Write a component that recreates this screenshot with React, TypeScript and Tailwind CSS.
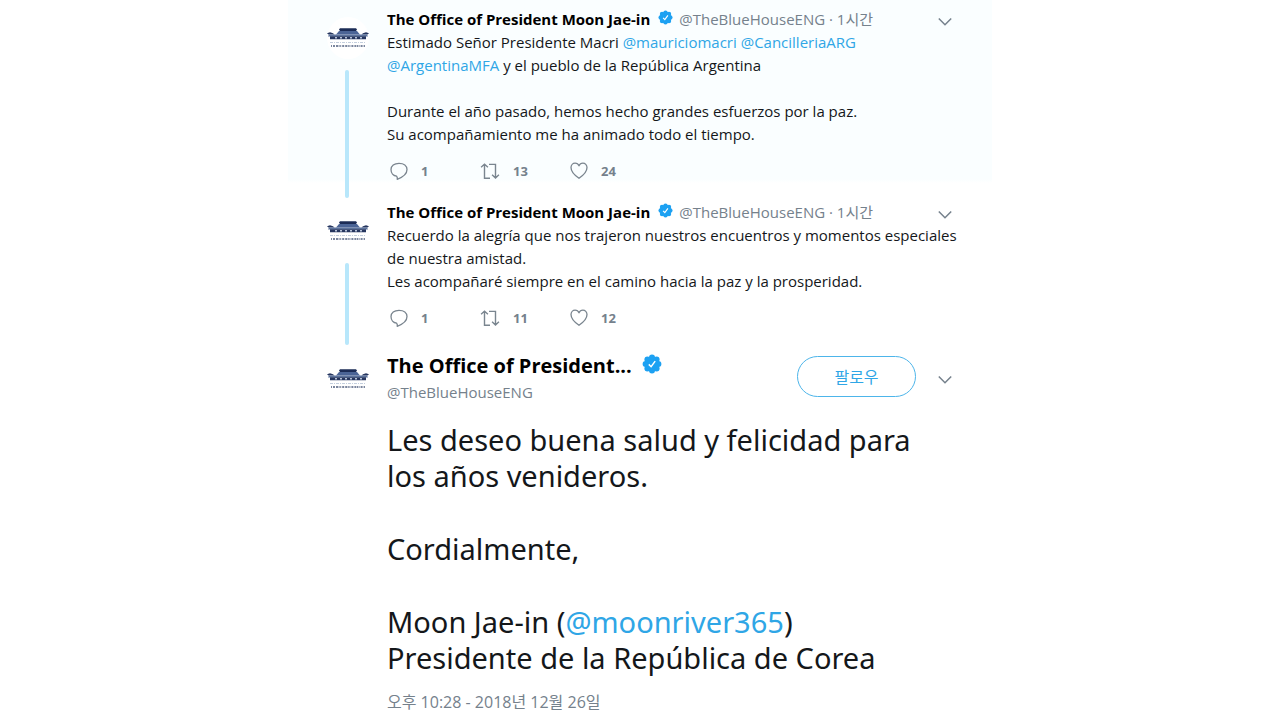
import { ReactNode } from "react";

const HANDLE = "@TheBlueHouseENG";

function Mention({ name }: { name: string }) {
  return (
    <a href={`#${name}`} className="text-[#2fa6e6] hover:underline">
      @{name}
    </a>
  );
}

function Avatar() {
  return (
    <svg viewBox="0 0 42 42" className="block w-[42px] h-[42px]" role="img" aria-label="The Blue House">
      <rect width="42" height="42" rx="21" fill="#fff" />
      <path d="M13 11.2h16l1 1.2-1 1.6H13l-1-1.6z" fill="#1c2c56" />
      <path d="M12 14h18l3 3.4H9z" fill="#4b6496" />
      <path d="M0 16.2l3-.9 3 1 1.5 1.2h27L36 16.3l3-1 3 .9-1.5 1.4h-39z" fill="#26365f" />
      <path d="M2 17.6h38l1 1.8H1z" fill="#5c739d" />
      <path d="M3 19.2h36v3H3z" fill="#26365f" />
      <path d="M8 20h2v1.600H8zM13 20h2v1.600h-2zM18 20h2v1.600h-2zM23 20h2v1.600h-2zM28 20h2v1.600h-2zM33 20h2v1.600h-2z" fill="#b7c3da" />
      <path d="M3 25.500h36" stroke="#c3cedd" strokeWidth="1" strokeDasharray="3 1 1 1" />
      <path d="M4 29h34" stroke="#7b869e" strokeWidth="2" strokeDasharray="1 1 2 1 2 .6 1 .6" />
    </svg>
  );
}

function VerifiedIcon({ className }: { className: string }) {
  return (
    <svg viewBox="0 0 20 20" className={className} role="img" aria-label="Verified">
      <g fill="#1da1f2">
        <circle cx="10" cy="10" r="7.6" />
        <circle cx="10" cy="3.6" r="3" />
        <circle cx="14.6" cy="5.4" r="3" />
        <circle cx="16.4" cy="10" r="3" />
        <circle cx="14.6" cy="14.6" r="3" />
        <circle cx="10" cy="16.4" r="3" />
        <circle cx="5.4" cy="14.6" r="3" />
        <circle cx="3.6" cy="10" r="3" />
        <circle cx="5.4" cy="5.4" r="3" />
      </g>
      <path d="M6.8 10.4l2.3 2.3 4.1-5.6" fill="none" stroke="#fff" strokeWidth="1.5" />
    </svg>
  );
}

function MoreButton() {
  return (
    <button type="button" aria-label="More" className="flex w-4 h-6 shrink-0 items-end justify-center pb-1">
      <svg viewBox="0 0 16 10" className="w-4 h-[10px]" fill="none" stroke="#75818c" strokeWidth="1.5">
        <path d="M1.8 1.5L8 7.8l6.2-6.3" />
      </svg>
    </button>
  );
}

function ReplyIcon() {
  return (
    <svg viewBox="0 0 20 20" className="w-5 h-5" fill="none" stroke="#7a858f" strokeWidth="1.3" strokeLinejoin="round">
      <path d="M7.600 15.200C4.200 14.800 2 12 2 8.600 2 4.900 5.200 2.300 10 2.300s8 2.600 8 6.300c0 4.200-4 7.600-9.800 9.700.3-1.100.1-2.300-.6-3.100z" />
    </svg>
  );
}

function RetweetIcon() {
  return (
    <svg viewBox="0 0 22 20" className="w-[22px] h-5" fill="none" stroke="#7a858f" strokeWidth="1.4">
      <path d="M11 17.300H5.500V3.600M2.100 6.300l3.400-3.200 3.400 3.200M10 3.400h6.500v13.200M13.100 13.800l3.400 3.200 3.400-3.200" />
    </svg>
  );
}

function LikeIcon() {
  return (
    <svg viewBox="0 0 20 20" className="w-5 h-5" fill="none" stroke="#7a858f" strokeWidth="1.3" strokeLinejoin="round">
      <path d="M10 17.300C5.500 14.300 2 10.500 2 6.600 2 4 3.900 2.100 6.100 2.100c1.800 0 3.200 1 3.900 2.700.7-1.700 2.100-2.700 3.900-2.700C16.100 2.100 18 4 18 6.600c0 3.900-3.500 7.700-8 10.700z" />
    </svg>
  );
}

interface ActionProps {
  label: string;
  count: number;
  icon: ReactNode;
}

function Action({ label, count, icon }: ActionProps) {
  return (
    <button type="button" aria-label={`${label} ${count}`} className="flex w-[90px] items-center gap-3">
      {icon}
      <span className="pt-[2px] text-[13px] font-bold text-[#75818c]">{count}</span>
    </button>
  );
}

interface ThreadTweetProps {
  replies: number;
  retweets: number;
  likes: number;
  children: ReactNode;
}

function ThreadTweet({ replies, retweets, likes, children }: ThreadTweetProps) {
  return (
    <>
      <div className="flex w-[60px] shrink-0 flex-col pt-[10px]">
        <Avatar />
        <div className="mt-[11px] mb-px ml-[18px] w-1 flex-1 rounded-full bg-[#b8e7fb]" />
      </div>
      <div className="min-w-0 flex-1 pb-4">
        <div className="flex h-6 items-center">
          <span className="text-[15px] font-bold text-black">The Office of President Moon Jae-in</span>
          <VerifiedIcon className="mr-[6px] mb-1 ml-2 w-[15px] h-[15px]" />
          <span className="flex-1 text-[15px] text-[#75818c]">{HANDLE} · 1시간</span>
          <MoreButton />
        </div>
        <div className="text-[15px] leading-[23px] whitespace-nowrap">{children}</div>
        <div className="mt-[13px] flex h-6 items-center pl-[2px]">
          <Action label="Reply" count={replies} icon={<ReplyIcon />} />
          <Action label="Retweet" count={retweets} icon={<RetweetIcon />} />
          <Action label="Like" count={likes} icon={<LikeIcon />} />
        </div>
      </div>
    </>
  );
}

export default function App() {
  return (
    <main className="min-h-screen bg-white font-['Open_Sans','Noto_Sans_CJK_KR',sans-serif] text-[#14171a]">
      <div className="mx-auto max-w-[704px]">
        <article className="flex bg-linear-to-b from-[#fafeff] from-90% to-white to-92% px-[39px] pt-[7px]">
          <ThreadTweet replies={1} retweets={13} likes={24}>
            <p>
              Estimado Señor Presidente Macri <Mention name="mauriciomacri" /> <Mention name="CancilleriaARG" />
              <br />
              <Mention name="ArgentinaMFA" /> y el pueblo de la República Argentina
            </p>
            <p className="mt-[23px]">
              Durante el año pasado, hemos hecho grandes esfuerzos por la paz.
              <br />
              Su acompañamiento me ha animado todo el tiempo.
            </p>
          </ThreadTweet>
        </article>

        <article className="flex px-[39px] pt-px">
          <ThreadTweet replies={1} retweets={11} likes={12}>
            <p>
              Recuerdo la alegría que nos trajeron nuestros encuentros y momentos especiales
              <br />
              de nuestra amistad.
              <br />
              Les acompañaré siempre en el camino hacia la paz y la prosperidad.
            </p>
          </ThreadTweet>
        </article>

        <article className="px-[39px] pt-[6px]">
          <header className="flex items-start">
            <div className="w-[60px] shrink-0 pt-[6px]">
              <Avatar />
            </div>
            <div className="min-w-0 flex-1">
              <div className="flex items-center gap-[10px]">
                <h1 className="text-[20px] leading-7 font-bold text-black">The Office of President...</h1>
                <VerifiedIcon className="mb-1 w-5 h-5" />
              </div>
              <p className="text-[15px] leading-6 text-[#75818c]">{HANDLE}</p>
            </div>
            <div className="flex items-center gap-[21px] pt-1">
              <button
                type="button"
                className="h-[41px] w-[119px] rounded-full border border-[#4db5ea] text-[16px] text-[#2fa6e6]"
              >
                팔로우
              </button>
              <MoreButton />
            </div>
          </header>
          <div className="mt-[18px] flex flex-col gap-[37px] pl-[60px] font-['Noto_Sans',sans-serif] text-[29px] leading-9 whitespace-nowrap">
            <p>
              Les deseo buena salud y felicidad para
              <br />
              los años venideros.
            </p>
            <p>Cordialmente,</p>
            <p>
              Moon Jae-in (<Mention name="moonriver365" />)
              <br />
              Presidente de la República de Corea
            </p>
          </div>
          <time dateTime="2018-12-26T22:28" className="mt-[14px] block pl-[60px] text-[16px] leading-6 text-[#75818c]">
            오후 10:28 - 2018년 12월 26일
          </time>
        </article>
      </div>
    </main>
  );
}
